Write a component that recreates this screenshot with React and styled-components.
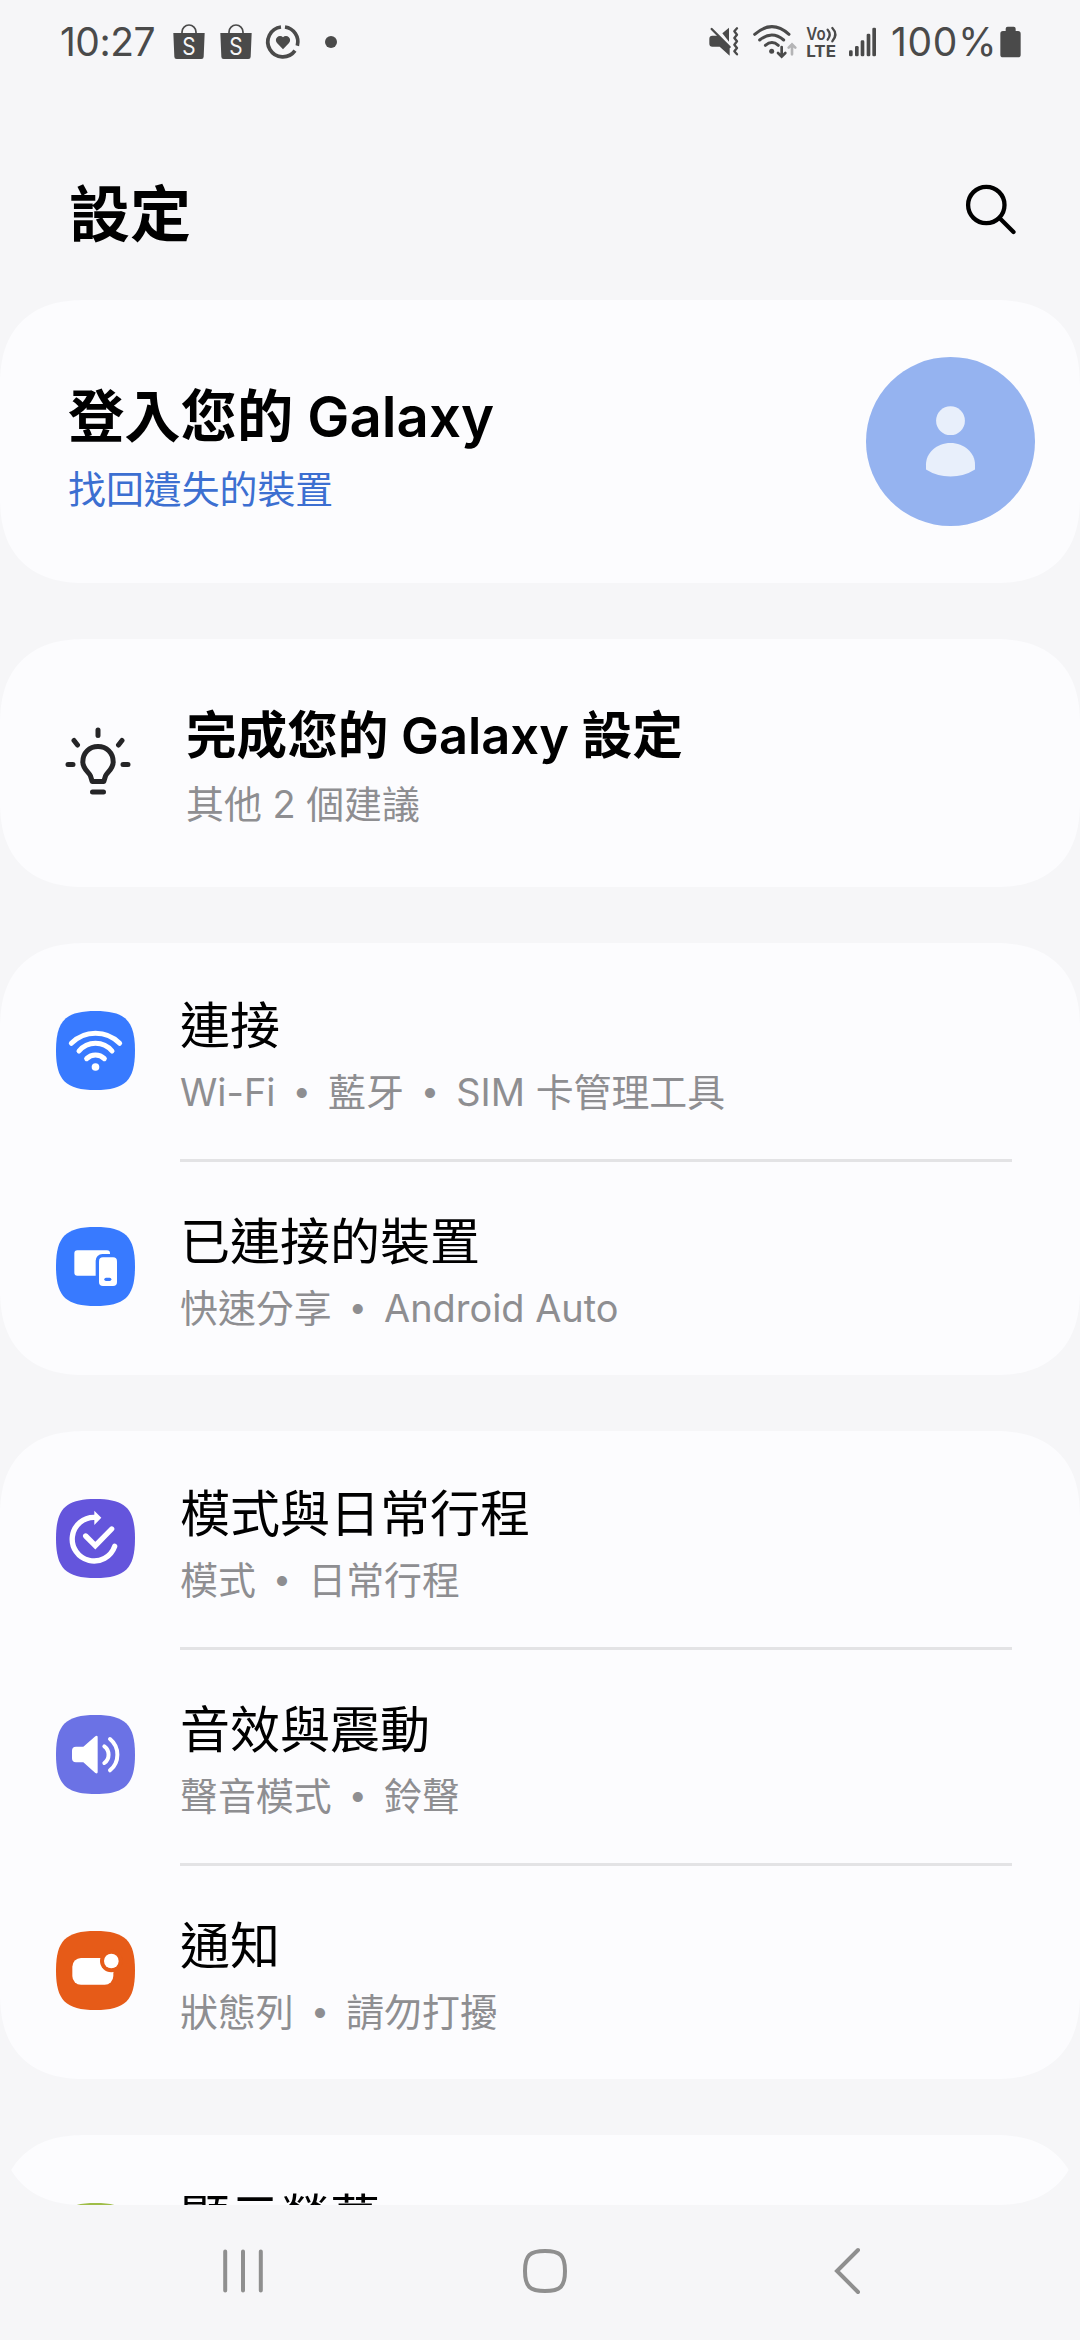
import React from "react";
import styled, { createGlobalStyle } from "styled-components";

const GlobalStyle = createGlobalStyle`
  body {
    margin: 0;
    background: #f6f6f8;
    font-family: Inter, "Noto Sans CJK TC", sans-serif;
    color: #000;
  }
`;

const Screen = styled.div`
  display: flex;
  flex-direction: column;
  width: 1080px;
  height: 2340px;
  overflow: hidden;
`;

const StatusBar = styled.div`
  display: flex;
  align-items: center;
  justify-content: space-between;
  height: 84px;
  padding: 0 59px 0 60px;
  box-sizing: border-box;
  color: #4a4a4a;
`;

const StatusGroup = styled.div`
  display: flex;
  align-items: center;
`;

const StatusText = styled.span`
  width: ${(props) => props.$width}px;
  margin-left: ${(props) => props.$gap || 0}px;
  font-size: 39px;
  font-weight: 400;
  line-height: 84px;
  letter-spacing: ${(props) => props.$spacing}px;
  white-space: nowrap;
`;

const StatusIcon = styled.svg`
  display: block;
  flex: none;
  margin-left: ${(props) => props.$gap}px;
  overflow: visible;
`;

const Header = styled.header`
  display: flex;
  align-items: center;
  justify-content: space-between;
  height: 216px;
  padding: 46px 63px 0 69px;
  box-sizing: border-box;
`;

const PageTitle = styled.h1`
  margin: 0;
  font-size: 61px;
  font-weight: 600;
  line-height: 88px;
`;

const SearchIcon = styled.svg`
  display: block;
  margin-top: -12px;
`;

const List = styled.main`
  display: flex;
  flex-direction: column;
  gap: 56px;
  flex: 1;
  min-height: 0;
  overflow: hidden;
  border-radius: 0 0 86px 86px;
  corner-shape: superellipse(1.26);
`;

const Card = styled.section`
  flex: none;
  background: #fcfcfe;
  border-radius: 86px;
  corner-shape: superellipse(1.26);
`;

const AccountCard = styled(Card)`
  display: flex;
  align-items: center;
  justify-content: space-between;
  height: 283px;
  padding: 0 45px 0 68px;
  box-sizing: border-box;
`;

const TipCard = styled(Card)`
  display: flex;
  align-items: center;
  height: 248px;
  padding-left: 62px;
  box-sizing: border-box;
`;

const TipIcon = styled.svg`
  display: block;
  flex: none;
  margin-bottom: 6px;
`;

const CardText = styled.div`
  padding-top: ${(props) => props.$drop}px;
  margin-left: ${(props) => props.$indent || 0}px;
`;

const CardTitle = styled.h2`
  margin: 0;
  font-size: ${(props) => props.$size}px;
  font-weight: 600;
  line-height: 76px;
`;

const CardLink = styled.a`
  display: block;
  padding-top: 4px;
  font-size: 37.9px;
  line-height: 60px;
  color: #3c6fd1;
`;

const Row = styled.div`
  display: flex;
  height: 216px;
  padding-left: 56px;
`;

const RowIcon = styled.svg`
  display: block;
  flex: none;
  margin-top: 68px;
`;

const RowBody = styled.div`
  flex: 1;
  height: 216px;
  margin: 0 68px 0 45px;
  padding-top: 44px;
  box-sizing: border-box;
  border-top: 3px solid ${(props) => (props.$divided ? "#e3e3e5" : "transparent")};
`;

const RowTitle = styled.div`
  font-size: 50px;
  line-height: 72px;
`;

const Summary = styled.div`
  font-size: 37.9px;
  line-height: 60px;
  color: #8e8e91;
  white-space: nowrap;
`;

const Dot = styled.span`
  position: relative;
  top: -4px;
  display: inline-block;
  width: 52.5px;
  font-size: 32px;
  line-height: 40px;
  text-align: center;
`;

const NavBar = styled.nav`
  display: flex;
  align-items: center;
  height: 135px;
  padding: 0 0 3px;
  box-sizing: border-box;
`;

const NavIcon = styled.svg`
  display: block;
  margin-left: ${(props) => props.$gap}px;
  fill: none;
  stroke: #8f8f8f;
  stroke-width: 4;
  stroke-linecap: round;
`;

const BagIcon = ({ gap }) => (
  <StatusIcon $gap={gap} width="32" height="36" viewBox="0 0 96 108">
    <path d="M27 30V24a21 21 0 0 1 42 0v6" fill="none" stroke="#4a4a4a" strokeWidth="5" />
    <path d="M1 27H95L92 98a7 7 0 0 1-7 7H11a7 7 0 0 1-7-7z" fill="#4a4a4a" />
    <text x="28" y="92" fontSize="72" fontFamily="Inter" textLength="40" lengthAdjust="spacingAndGlyphs" fill="#f6f6f8">S</text>
  </StatusIcon>
);

const HeartRingIcon = () => (
  <StatusIcon $gap={14} width="34" height="34" viewBox="0 0 102 102">
    <g fill="none" stroke="#4a4a4a" strokeWidth="11">
      <path d="M57 6A45 45 0 0 1 94 62" />
      <path d="M87 77A45 45 0 1 1 45 6" />
    </g>
    <path d="M51 73L33 54a12 12 0 0 1 18-17a12 12 0 0 1 18 17z" fill="#4a4a4a" />
  </StatusIcon>
);

const MuteIcon = () => (
  <StatusIcon $gap={0} width="30" height="30" viewBox="0 0 90 90">
    <path d="M10 26H26L62 62V86L32 59H10a9 9 0 0 1-9-9V35a9 9 0 0 1 9-9z" fill="#4a4a4a" />
    <path d="M40 19L60 2V44z" fill="#4a4a4a" />
    <path d="M8 6L62 60" stroke="#4a4a4a" strokeWidth="7" strokeLinecap="round" />
    <path
      d="M84 4l-8 9 8 10-8 10 8 10-8 10 8 10-8 10 8 9"
      fill="none"
      stroke="#4a4a4a"
      strokeWidth="7"
      strokeLinecap="round"
      strokeLinejoin="round"
    />
  </StatusIcon>
);

const WifiStatusIcon = () => (
  <StatusIcon $gap={14} width="45" height="34" viewBox="0 0 135 102">
    <g fill="none" stroke="#4a4a4a" strokeWidth="9" strokeLinecap="round">
      <path d="M5 28Q57-18 108 28" />
      <path d="M20 45Q57 15 92 45" />
      <path d="M37 61Q57 44 76 61" />
      <path d="M86 66V94M75 84L86 95L97 84" strokeWidth="8" />
      <path d="M117 88V59M107 68L117 58L127 68" stroke="#b4b4b6" strokeWidth="8" />
    </g>
    <circle cx="56" cy="79" r="7.500" fill="#4a4a4a" />
  </StatusIcon>
);

const VolteIcon = () => (
  <StatusIcon $gap={8} width="32" height="34" viewBox="0 0 96 102">
    <g fill="#4a4a4a" fontFamily="Inter" fontWeight="700">
      <text x="1" y="46" fontSize="50" fontWeight="600" textLength="58" lengthAdjust="spacingAndGlyphs">Vo</text>
      <text x="1" y="97" fontSize="49" textLength="89" lengthAdjust="spacingAndGlyphs">LTE</text>
    </g>
    <g fill="none" stroke="#4a4a4a" strokeWidth="7" strokeLinecap="round">
      <path d="M65 14Q77 28 65 44" />
      <path d="M79 9Q97 28 79 49" />
    </g>
  </StatusIcon>
);

const signalBars = [
  [0, 70],
  [18, 57],
  [35, 40],
  [53, 20],
  [70, 2],
];

const SignalIcon = () => (
  <StatusIcon $gap={11} width="27" height="30" viewBox="0 0 81 90">
    {signalBars.map(([x, y]) => (
      <rect key={x} x={x} y={y} width="11" height={88 - y} rx="4" fill="#4a4a4a" />
    ))}
  </StatusIcon>
);

const BatteryIcon = () => (
  <StatusIcon $gap={6} width="21" height="32" viewBox="0 0 63 96">
    <path
      d="M23 2H41a6 6 0 0 1 6 6V15H54a8 8 0 0 1 8 8V86a8 8 0 0 1-8 8H9a8 8 0 0 1-8-8V23a8 8 0 0 1 8-8H17V8a6 6 0 0 1 6-6z"
      fill="#4a4a4a"
    />
  </StatusIcon>
);

const Avatar = () => (
  <svg width="169" height="169" viewBox="0 0 169 169">
    <circle cx="84.500" cy="84.500" r="84.500" fill="#95b3f0" />
    <circle cx="84.500" cy="63.700" r="14.400" fill="#e8effb" />
    <path
      d="M60 112.500V107.500C60 96 70.500 86 84.500 86S109 96 109 107.500V112.500Q98 119.500 84.500 119.500T60 112.500z"
      fill="#e8effb"
    />
  </svg>
);

const BulbIcon = () => (
  <TipIcon width="72" height="72" viewBox="0 0 72 72" fill="none" stroke="#252527" strokeWidth="5">
    <path
      d="M36 22.500c-8.500 0-15.200 6-15.200 15.500 0 7 6 10 7.700 14l1.700 5.500h11.600l1.700-5.500c1.700-4 7.700-7 7.700-14 0-9.500-6.700-15.500-15.200-15.500z"
      strokeLinejoin="round"
    />
    <path
      d="M36 6V11.500M12 16.500L15.500 21M60 16.500L56.500 21M6 40.500H11M61 40.500H66M30.500 68H41.500"
      strokeLinecap="round"
    />
  </TipIcon>
);

// every row icon is drawn on the same 237-unit squircle
const Squircle = ({ color, children }) => (
  <RowIcon width="79" height="79" viewBox="0 0 237 237">
    <path
      d="M0 118.500C0 29 29 0 118.500 0S237 29 237 118.500 208 237 118.500 237 0 208 0 118.500z"
      fill={color}
    />
    {children}
  </RowIcon>
);

const WifiIcon = () => (
  <Squircle color="#387aff">
    <g fill="none" stroke="#fff" strokeWidth="15" strokeLinecap="round">
      <path d="M46 97A102 102 0 0 1 191 97" />
      <path d="M69 120A64 64 0 0 1 168 120" />
      <path d="M92 143A38 38 0 0 1 145 143" />
    </g>
    <circle cx="118.500" cy="168" r="11.500" fill="#fff" />
  </Squircle>
);

const DevicesIcon = () => (
  <Squircle color="#387aff">
    <path
      d="M64 70H153a9 9 0 0 1 9 9v2H139a20 20 0 0 0-20 20v45H64a9 9 0 0 1-9-9V79a9 9 0 0 1 9-9z"
      fill="#fff"
    />
    <rect x="129" y="91" width="54" height="86" rx="12" fill="#fff" />
    <rect x="145" y="152" width="21" height="10" rx="5" fill="#387aff" />
  </Squircle>
);

const ModesIcon = () => (
  <Squircle color="#6455dc">
    <g fill="none" stroke="#fff" strokeWidth="16" strokeLinecap="round">
      <path d="M116 55A65.500 65.500 0 1 0 176 142" />
      <path d="M89 111L118 140L167 90" />
    </g>
    <path d="M115 35L136 56L115 78z" fill="#fff" />
  </Squircle>
);

const SoundIcon = () => (
  <Squircle color="#6b72e5">
    <path
      d="M60 95H82L118 64q7-4 7 3V171q0 7-7 3L82 142H60a12 12 0 0 1-12-12V107a12 12 0 0 1 12-12z"
      fill="#fff"
    />
    <g fill="none" stroke="#fff" strokeWidth="12" strokeLinecap="round">
      <path d="M145 94A31 31 0 0 1 145 144" />
      <path d="M162 72A61 61 0 0 1 162 166" />
    </g>
  </Squircle>
);

const NotificationIcon = () => (
  <Squircle color="#e65b18">
    <rect x="49" y="81" width="123" height="80" rx="26" fill="#fff" />
    <rect x="130" y="81" width="42" height="44" fill="#fff" />
    <circle cx="166" cy="90" r="34" fill="#e65b18" />
    <circle cx="166" cy="90" r="22" fill="#fff" />
  </Squircle>
);

const DisplayIcon = () => <Squircle color="#9fbd48" />;

const groups = [
  [
    { title: "連接", summary: ["Wi-Fi", "藍牙", "SIM 卡管理工具"], Icon: WifiIcon },
    { title: "已連接的裝置", summary: ["快速分享", "Android Auto"], Icon: DevicesIcon },
  ],
  [
    { title: "模式與日常行程", summary: ["模式", "日常行程"], Icon: ModesIcon },
    { title: "音效與震動", summary: ["聲音模式", "鈴聲"], Icon: SoundIcon },
    { title: "通知", summary: ["狀態列", "請勿打擾"], Icon: NotificationIcon },
  ],
  [{ title: "顯示螢幕", summary: [], Icon: DisplayIcon }],
];

const App = () => {
  return (
    <Screen>
      <GlobalStyle />
      <StatusBar>
        <StatusGroup>
          <StatusText $width={97} $spacing={-0.5}>10:27</StatusText>
          <BagIcon gap={16} />
          <BagIcon gap={15} />
          <HeartRingIcon />
          <StatusIcon $gap={25} width="12" height="12" viewBox="0 0 12 12">
            <circle cx="6" cy="6" r="6" fill="#4a4a4a" />
          </StatusIcon>
        </StatusGroup>
        <StatusGroup>
          <MuteIcon />
          <WifiStatusIcon />
          <VolteIcon />
          <SignalIcon />
          <StatusText $gap={15} $width={103} $spacing={0.7}>100%</StatusText>
          <BatteryIcon />
        </StatusGroup>
      </StatusBar>
      <Header>
        <PageTitle>設定</PageTitle>
        <SearchIcon
          width="52"
          height="52"
          viewBox="0 0 52 52"
          fill="none"
          stroke="#000"
          strokeWidth="4.300"
          strokeLinecap="round"
        >
          <circle cx="21.300" cy="22" r="18.200" />
          <path d="M34.500 35L48.500 49" />
        </SearchIcon>
      </Header>
      <List>
        <AccountCard>
          <CardText $drop={14}>
            <CardTitle $size={56.3}>登入您的 Galaxy</CardTitle>
            <CardLink>找回遺失的裝置</CardLink>
          </CardText>
          <Avatar />
        </AccountCard>
        <TipCard>
          <BulbIcon />
          <CardText $indent={52} $drop={6}>
            <CardTitle $size={50.6}>完成您的 Galaxy 設定</CardTitle>
            <Summary>其他 2 個建議</Summary>
          </CardText>
        </TipCard>
        {groups.map((rows) => (
          <Card key={rows[0].title}>
            {rows.map(({ title, summary, Icon }, index) => (
              <Row key={title}>
                <Icon />
                <RowBody $divided={index > 0}>
                  <RowTitle>{title}</RowTitle>
                  <Summary>
                    {summary.map((part, i) => (
                      <React.Fragment key={part}>
                        {i > 0 && <Dot>•</Dot>}
                        {part}
                      </React.Fragment>
                    ))}
                  </Summary>
                </RowBody>
              </Row>
            ))}
          </Card>
        ))}
      </List>
      <NavBar>
        <NavIcon $gap={223} width="40" height="44" viewBox="0 0 40 44">
          <path d="M2.200 2.500V41.500M20 2.500V41.500M37.800 2.500V41.500" />
        </NavIcon>
        <NavIcon $gap={259} width="46" height="46" viewBox="0 0 46 46">
          <path d="M23 3C38 3 43 7 43 23S38 43 23 43 3 39 3 23 8 3 23 3z" />
        </NavIcon>
        <NavIcon $gap={266} width="28" height="48" viewBox="0 0 28 48">
          <path d="M24 3L3 24L24 45" />
        </NavIcon>
      </NavBar>
    </Screen>
  );
};

export default App;
